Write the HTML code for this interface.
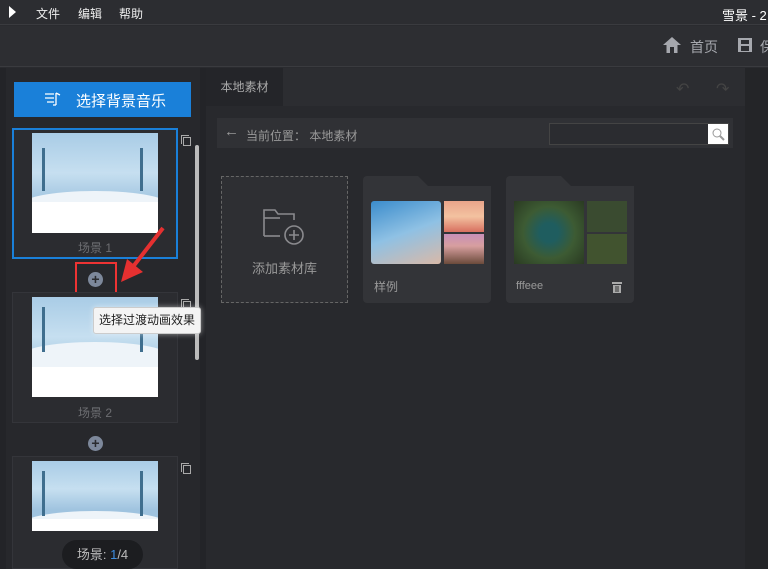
<!DOCTYPE html>
<html><head><meta charset="utf-8"><style>
*{margin:0;padding:0;box-sizing:border-box}
body{width:768px;height:569px;overflow:hidden;background:#2a2b2f;font-family:"Liberation Sans","Noto Sans CJK SC",sans-serif;position:relative;color:#ccc}
.a{position:absolute}
.thumb{position:absolute;background:linear-gradient(#a9cce6 0%,#c6dff0 40%,#9fc3df 70%);overflow:hidden}
.thumb .snow{position:absolute;left:0;right:0;bottom:0;background:#fff}
.thumb .hill{position:absolute;left:-10%;width:120%;background:#eef4f9;border-radius:50% 50% 0 0}
.tree{position:absolute;width:3px;background:#3f6e8e}
.scene{position:absolute;left:12px;width:166px;border:1px solid #34353a;background:#2b2c30}
.lbl{position:absolute;left:0;right:0;text-align:center;font-size:12px;color:#6d6e72}
.plus{position:absolute;width:15px;height:15px;border-radius:50%;background:#7d889b;color:#2a2b2f;font-size:14px;font-weight:bold;line-height:15px;text-align:center}
.copy{position:absolute;width:8px;height:9px;border:1px solid #aaa}
.copy:before{content:"";position:absolute;left:-3px;top:-3px;width:7px;height:8px;border-left:1px solid #aaa;border-top:1px solid #aaa}
</style></head><body>
<div class="a" style="left:0;top:0;width:768px;height:25px;background:#2c2d31;border-bottom:1px solid #3a3b3f"></div>
<div class="a" style="left:9px;top:6px;width:0;height:0;border-top:6px solid transparent;border-bottom:6px solid transparent;border-left:7px solid #fff"></div>
<div class="a" style="left:36px;top:5px;font-size:12px;color:#eee">文件</div>
<div class="a" style="left:78px;top:5px;font-size:12px;color:#eee">编辑</div>
<div class="a" style="left:119px;top:5px;font-size:12px;color:#eee">帮助</div>
<div class="a" style="left:722px;top:5px;font-size:13px;color:#fff;white-space:nowrap">雪景 - 2</div>
<div class="a" style="left:0;top:26px;width:768px;height:41px;background:#2d2e32;border-bottom:1px solid #3a3b3f"></div>
<svg class="a" style="left:662px;top:36px" width="20" height="18" viewBox="0 0 20 18"><path d="M10 1 L19 9 L15.5 9 L15.5 17 L4.5 17 L4.5 9 L1 9 Z" fill="#a6a8ae"/><rect x="8" y="11" width="4" height="6" fill="#2d2e32"/></svg>
<div class="a" style="left:690px;top:37px;font-size:14px;color:#a6a8ae">首页</div>
<svg class="a" style="left:737px;top:37px" width="16" height="16"><rect x="1" y="1" width="14" height="14" fill="#a6a8ae"/><rect x="4" y="3" width="8" height="4" fill="#2d2e32"/><rect x="4" y="9" width="8" height="5" fill="#2d2e32"/></svg>
<div class="a" style="left:760px;top:37px;font-size:14px;color:#a6a8ae">保</div>
<div class="a" style="left:0;top:68px;width:6px;height:501px;background:#232428"></div>
<div class="a" style="left:6px;top:68px;width:194px;height:501px;background:#27282c"></div>
<div class="a" style="left:200px;top:68px;width:6px;height:501px;background:#232428"></div>
<div class="a" style="left:14px;top:82px;width:177px;height:35px;background:#1a80d9"></div>
<svg class="a" style="left:44px;top:91px" width="18" height="16"><g stroke="#fff" stroke-width="1.3" fill="none"><path d="M1 3h9M1 7h9M3 11h7"/><path d="M12 2v12M12 2l4 2"/><path d="M12 14h-3"/></g></svg>
<div class="a" style="left:76px;top:90px;font-size:15px;color:#fff">选择背景音乐</div>
<div class="scene" style="top:128px;height:131px;border:2px solid #1a80d9"></div>
<div class="thumb" style="left:32px;top:133px;width:126px;height:100px"><div class="hill" style="top:58px;height:30px"></div><div class="snow" style="height:31px"></div><div class="tree" style="left:10px;top:15px;height:43px"></div><div class="tree" style="left:108px;top:15px;height:43px"></div></div>
<div class="lbl" style="left:12px;width:166px;top:239px">场景 1</div>
<div class="copy" style="left:183px;top:137px"></div>
<div class="a" style="left:195px;top:145px;width:4px;height:215px;background:#bbb;border-radius:2px"></div>
<div class="plus" style="left:88px;top:272px">+</div>
<div class="a" style="left:75px;top:262px;width:42px;height:34px;border:2px solid #e33"></div>
<svg class="a" style="left:115px;top:222px" width="55" height="65"><path d="M48 6 L17 46" stroke="#e53030" stroke-width="4"/><path d="M6 60 L12 37 L28 50 Z" fill="#e53030"/></svg>
<div class="scene" style="top:292px;height:131px"></div>
<div class="thumb" style="left:32px;top:297px;width:126px;height:100px"><div class="hill" style="top:45px;height:30px"></div><div class="snow" style="height:30px"></div><div class="tree" style="left:10px;top:10px;height:45px"></div><div class="tree" style="left:108px;top:35px;height:20px"></div></div>
<div class="lbl" style="left:12px;width:166px;top:404px">场景 2</div>
<div class="copy" style="left:183px;top:301px"></div>
<div class="a" style="left:93px;top:307px;width:108px;height:27px;background:#f4f4f4;border:1px solid #ccc;border-radius:3px;box-shadow:0 0 6px rgba(255,255,255,.5);font-size:12px;color:#222;line-height:25px;text-align:center">选择过渡动画效果</div>
<div class="plus" style="left:88px;top:436px">+</div>
<div class="scene" style="top:456px;height:113px"></div>
<div class="thumb" style="left:32px;top:461px;width:126px;height:70px"><div class="hill" style="top:50px;height:30px"></div><div class="snow" style="height:12px"></div><div class="tree" style="left:10px;top:10px;height:45px"></div><div class="tree" style="left:108px;top:10px;height:45px"></div></div>
<div class="copy" style="left:183px;top:465px"></div>
<div class="a" style="left:62px;top:540px;width:81px;height:29px;border-radius:15px;background:#1c1d20;font-size:13px;color:#bbb;line-height:29px;text-align:center">场景: <span style="color:#3d8ee0">1</span>/4</div>
<div class="a" style="left:206px;top:68px;width:539px;height:38px;background:#2c2d31"></div>
<div class="a" style="left:206px;top:68px;width:77px;height:38px;background:#242529;font-size:12px;color:#aaa;line-height:38px;text-align:center">本地素材</div>
<div class="a" style="left:745px;top:68px;width:23px;height:501px;background:#242528"></div>
<div class="a" style="left:676px;top:79px;font-size:16px;color:#444">↶</div>
<div class="a" style="left:716px;top:79px;font-size:16px;color:#444">↷</div>
<div class="a" style="left:206px;top:106px;width:539px;height:463px;background:#28292d"></div>
<div class="a" style="left:217px;top:118px;width:516px;height:30px;background:#303135"></div>
<div class="a" style="left:224px;top:123px;font-size:15px;color:#999">←</div>
<div class="a" style="left:246px;top:127px;font-size:12px;color:#999">当前位置：  本地素材</div>
<div class="a" style="left:549px;top:123px;width:180px;height:22px;border:1px solid #444;background:#2b2c30"></div>
<div class="a" style="left:708px;top:124px;width:20px;height:20px;background:#fff"></div>
<svg class="a" style="left:711px;top:127px" width="14" height="14"><circle cx="6" cy="6" r="4" stroke="#999" fill="none"/><path d="M9 9l4 4" stroke="#999" stroke-width="2"/></svg>
<div class="a" style="left:221px;top:176px;width:127px;height:127px;border:1px dashed #666;background:#2e2f33"></div>
<svg class="a" style="left:262px;top:208px" width="44" height="38"><g stroke="#8a8a8e" stroke-width="1.6" fill="none"><path d="M2 28V2h11l3 4h16v6"/><path d="M2 28h16"/><path d="M2 10h16"/><circle cx="32" cy="27" r="9"/><path d="M32 22v10M27 27h10"/></g></svg>
<div class="a" style="left:221px;top:258px;width:127px;text-align:center;font-size:13px;color:#999">添加素材库</div>
<div class="a" style="left:363px;top:176px;width:128px;height:127px;background:#333438;border-radius:4px;clip-path:polygon(0 0,55px 0,65px 10px,100% 10px,100% 100%,0 100%)"></div>
<div class="a" style="left:371px;top:201px;width:70px;height:63px;border-radius:3px;background:linear-gradient(160deg,#3b8ccc,#8fc1e4 50%,#d9b9a8)"></div>
<div class="a" style="left:444px;top:201px;width:40px;height:31px;background:linear-gradient(#e9a48a,#f3c2a0 50%,#d87060)"></div>
<div class="a" style="left:444px;top:234px;width:40px;height:30px;background:linear-gradient(#c88fb8,#d79f9f 40%,#6b4b3b)"></div>
<div class="a" style="left:374px;top:278px;font-size:12px;color:#999">样例</div>
<div class="a" style="left:506px;top:176px;width:128px;height:127px;background:#333438;border-radius:4px;clip-path:polygon(0 0,55px 0,65px 10px,100% 10px,100% 100%,0 100%)"></div>
<div class="a" style="left:514px;top:201px;width:70px;height:63px;background:radial-gradient(circle at 50% 50%,#1f5d5f 20%,#3d5b33 55%,#2a3a22)"></div>
<div class="a" style="left:587px;top:201px;width:40px;height:31px;background:#3a4b30"></div>
<div class="a" style="left:587px;top:234px;width:40px;height:30px;background:#41532f"></div>
<div class="a" style="left:516px;top:280px;font-size:11px;color:#999">fffeee</div>
<svg class="a" style="left:611px;top:281px" width="12" height="12"><rect x="1" y="1" width="10" height="2" fill="#aaa"/><rect x="2" y="4" width="8" height="8" fill="#aaa"/><path d="M5 5v6M7 5v6" stroke="#333" /></svg>
</body></html>
